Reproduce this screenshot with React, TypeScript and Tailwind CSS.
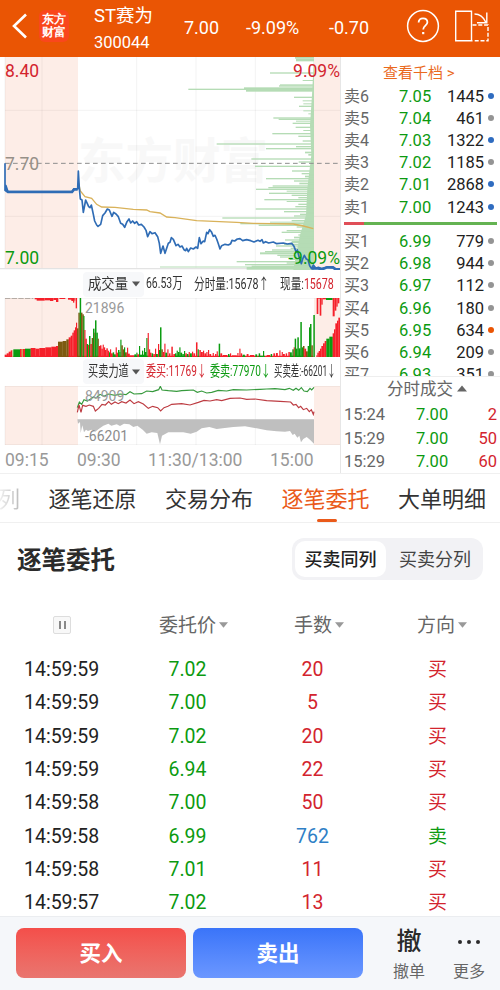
import clsx from "clsx";
import { ReactNode } from "react";

type Point = [number, number];

const toPoints = (list: Point[]) => list.map((p) => p.join(",")).join(" ");

const asks = [
  { label: "卖6", price: "7.05", volume: "1445", dot: "bg-[#2f6cc0]" },
  { label: "卖5", price: "7.04", volume: "461", dot: "bg-[#949494]" },
  { label: "卖4", price: "7.03", volume: "1322", dot: "bg-[#2f6cc0]" },
  { label: "卖3", price: "7.02", volume: "1185", dot: "bg-[#949494]" },
  { label: "卖2", price: "7.01", volume: "2868", dot: "bg-[#2f6cc0]" },
  { label: "卖1", price: "7.00", volume: "1243", dot: "bg-[#2f6cc0]" },
];

const bids = [
  { label: "买1", price: "6.99", volume: "779", dot: "bg-[#949494]" },
  { label: "买2", price: "6.98", volume: "944", dot: "bg-[#949494]" },
  { label: "买3", price: "6.97", volume: "112", dot: "bg-[#949494]" },
  { label: "买4", price: "6.96", volume: "180", dot: "bg-[#949494]" },
  { label: "买5", price: "6.95", volume: "634", dot: "bg-[#ea5404]" },
  { label: "买6", price: "6.94", volume: "209", dot: "bg-[#949494]" },
  { label: "买7", price: "6.93", volume: "351", dot: "bg-[#949494]" },
];

const ticks = [
  { time: "15:24", price: "7.00", volume: "2" },
  { time: "15:29", price: "7.00", volume: "50" },
  { time: "15:29", price: "7.00", volume: "60" },
];

const orders = [
  { time: "14:59:59", price: "7.02", hands: "20", side: "买" },
  { time: "14:59:59", price: "7.00", hands: "5", side: "买" },
  { time: "14:59:59", price: "7.02", hands: "20", side: "买" },
  { time: "14:59:59", price: "6.94", hands: "22", side: "买" },
  { time: "14:59:58", price: "7.00", hands: "50", side: "买" },
  { time: "14:59:58", price: "6.99", hands: "762", side: "卖" },
  { time: "14:59:58", price: "7.01", hands: "11", side: "买" },
  { time: "14:59:57", price: "7.02", hands: "13", side: "买" },
];

// chart data, three units to a pixel
const priceLine: Point[] = [
  [15, 325], [15, 405], [18, 392], [24, 410], [216, 410], [222, 402], [233, 402], [235, 348], [238, 400], [241, 432],
  [246, 435], [250, 472], [257, 435], [262, 446], [266, 455], [270, 458], [274, 450], [280, 478], [284, 498], [290, 510],
  [294, 514], [302, 508], [308, 482], [315, 474], [322, 462], [328, 465], [336, 484], [341, 472], [348, 477], [355, 485],
  [362, 505], [368, 508], [374, 517], [381, 500], [387, 492], [392, 504], [398, 498], [404, 505], [410, 500], [416, 510],
  [424, 508], [432, 516], [438, 526], [443, 545], [450, 530], [456, 536], [465, 533], [473, 545], [478, 565], [482, 595],
  [489, 573], [495, 595], [500, 580], [505, 565], [510, 562], [514, 548], [520, 553], [528, 572], [534, 568], [540, 576],
  [546, 573], [552, 584], [557, 587], [560, 580], [565, 590], [572, 579], [580, 582], [588, 576], [593, 580], [598, 548],
  [603, 566], [610, 558], [614, 560], [620, 532], [624, 536], [629, 524], [634, 530], [640, 544], [645, 541], [650, 552],
  [655, 566], [660, 582], [665, 572], [675, 568], [685, 570], [692, 566], [696, 556], [704, 558], [712, 552], [720, 551],
  [728, 557], [740, 554], [752, 557], [762, 561], [774, 556], [780, 559], [786, 554], [790, 564], [797, 560], [806, 564],
  [820, 561], [830, 566], [850, 564], [862, 567], [875, 565], [882, 574], [888, 590], [892, 585], [898, 608], [904, 626],
  [908, 612], [913, 601], [919, 612], [924, 614], [929, 632], [935, 641], [940, 630], [948, 640], [955, 637], [966, 641],
  [982, 636], [998, 638], [1006, 643], [1018, 642],
];

const averageLine: Point[] = [
  [236, 385], [241, 408], [255, 425], [275, 430], [290, 448], [305, 456], [345, 457], [400, 463], [440, 465], [450, 470],
  [480, 474], [500, 486], [525, 488], [590, 497], [710, 502], [760, 505], [880, 507], [910, 513], [940, 521],
];

const profile: [number, number, number][] = [
  [6, 375, 5], [11, 378, 8], [52, 300, 4], [75, 398, 3], [88, 330, 4], [91, 327, 4], [97, 222, 5], [101, 55, 4], [105, 228, 5],
  [125, 372, 4], [136, 398, 3], [145, 400, 3], [152, 387, 4], [166, 400, 3], [175, 415, 3], [187, 310, 4], [191, 326, 4],
  [197, 378, 3], [203, 368, 4], [215, 377, 4], [225, 400, 3], [234, 307, 4], [242, 385, 4], [256, 398, 4], [265, 140, 4],
  [273, 378, 4], [279, 288, 4], [290, 405, 5], [297, 415, 5], [310, 244, 4], [319, 386, 4], [332, 255, 4], [346, 366, 4],
  [354, 395, 4], [362, 405, 5], [369, 288, 4], [376, 372, 4], [383, 388, 5], [391, 308, 4], [396, 295, 4], [401, 258, 4],
  [407, 350, 3], [413, 297, 4], [419, 365, 4], [426, 385, 4], [432, 283, 4], [438, 350, 3], [446, 385, 4], [453, 376, 4],
  [460, 257, 4], [468, 342, 4], [476, 390, 4], [481, 372, 4], [487, 157, 4], [495, 365, 4], [500, 300, 3], [504, 211, 4],
  [509, 266, 4], [514, 380, 4], [525, 350, 4], [530, 335, 4], [538, 385, 4], [545, 372, 5], [553, 345, 4], [558, 365, 6],
  [566, 342, 4], [571, 318, 4], [578, 362, 4], [583, 306, 4], [588, 285, 4], [592, 270, 6], [599, 322, 4], [604, 330, 4],
  [610, 360, 5], [618, 200, 4], [622, 350, 4], [627, 225, 4], [632, 245, 4], [636, 230, 8],
];

const R = "#f5202a";
const G = "#0b9c10";
const B = "#7d5a10";

// x, top, width, colour
const volumeBars: [number, number, number, string][] = [
  [14, 254, 6, R], [20, 250, 6, R], [26, 245, 6, R], [32, 241, 5, R], [37, 240, 3, "#c8d8a0"], [40, 238, 20, G], [60, 237, 5, R],
  [65, 237, 4, "#c9a050"], [69, 237, 6, R], [75, 236, 17, G], [92, 234, 14, R], [106, 236, 12, R], [118, 234, 18, R],
  [136, 232, 18, R], [154, 230, 14, R], [168, 228, 6, R], [174, 215, 14, B], [188, 213, 11, B], [199, 208, 7, B],
  [206, 202, 6, R], [212, 197, 5, R], [217, 188, 4, R], [221, 181, 4, R], [225, 172, 3, R], [228, 158, 3, R],
  [231, 175, 4, B], [235, 128, 4, B], [239, 84, 4, G], [243, 128, 4, B], [247, 133, 4, B], [250, 138, 3, G], [253, 180, 3, R],
  [256, 206, 4, R], [260, 222, 4, G], [264, 225, 3, R], [267, 198, 4, G], [271, 222, 4, R], [275, 204, 4, B], [279, 176, 4, G],
  [283, 188, 2, B], [285, 151, 4, G], [289, 188, 4, G], [293, 206, 3, B], [296, 228, 4, R], [300, 226, 4, R], [304, 236, 4, R],
  [308, 224, 3, R], [311, 232, 4, R], [315, 240, 4, R], [319, 235, 4, R], [323, 242, 4, R], [327, 247, 3, G], [330, 238, 3, R],
  [333, 250, 5, R], [338, 247, 4, G], [342, 253, 5, G], [347, 232, 3, R], [350, 248, 4, R], [354, 240, 4, G], [358, 246, 3, G],
  [361, 209, 3, G], [364, 226, 4, B], [368, 238, 4, B], [372, 232, 3, G], [375, 247, 5, B], [381, 233, 3, R], [384, 251, 5, R],
  [389, 256, 14, R], [403, 253, 5, G], [409, 248, 3, G], [412, 253, 5, R], [417, 228, 3, G], [420, 254, 6, G], [426, 242, 3, G],
  [429, 254, 3, G], [432, 234, 3, G], [435, 246, 4, G], [439, 204, 3, G], [443, 189, 3, R], [447, 238, 3, R], [450, 248, 4, R],
  [455, 250, 4, G], [460, 252, 4, R], [465, 236, 3, R], [468, 252, 5, G], [474, 222, 3, R], [477, 240, 3, G], [480, 172, 4, G],
  [484, 238, 4, B], [488, 246, 5, R], [493, 221, 3, R], [496, 248, 5, G], [502, 238, 3, R], [507, 250, 4, R], [514, 230, 4, R],
  [520, 252, 5, R], [525, 250, 4, G], [530, 242, 3, G], [534, 246, 4, G], [538, 232, 3, G], [541, 248, 5, G], [547, 252, 4, G],
  [552, 243, 3, G], [556, 250, 4, R], [561, 252, 4, G], [566, 246, 3, R], [570, 250, 5, G], [576, 245, 3, R], [580, 250, 5, R],
  [588, 217, 4, R], [593, 238, 3, G], [598, 240, 4, R], [603, 246, 5, R], [609, 242, 3, R], [613, 250, 5, R], [619, 246, 3, R],
  [624, 240, 3, R], [628, 252, 5, R], [638, 249, 3, R], [645, 252, 4, R], [650, 244, 3, R], [656, 221, 4, G], [661, 250, 5, R],
  [668, 255, 14, R], [684, 252, 4, G], [690, 250, 3, R], [696, 256, 14, R], [712, 249, 3, R], [718, 236, 3, R], [722, 250, 4, R],
  [728, 254, 6, G], [740, 252, 5, R], [750, 255, 12, R], [766, 253, 5, G], [776, 250, 4, G], [789, 243, 3, G], [800, 255, 10, R],
  [812, 252, 4, G], [820, 250, 5, R], [828, 249, 5, R], [838, 241, 3, R], [845, 246, 3, R], [849, 252, 5, R], [857, 250, 4, R],
  [865, 246, 4, R], [870, 247, 5, G], [877, 238, 4, G], [881, 232, 3, R], [884, 206, 4, G], [888, 236, 4, G], [892, 202, 4, G],
  [896, 235, 5, G], [901, 156, 4, G], [905, 232, 4, G], [909, 228, 4, B], [913, 236, 5, R], [918, 244, 5, B], [923, 228, 4, G],
  [927, 172, 3, G], [930, 162, 4, G], [934, 226, 4, B], [940, 135, 4, G],
  [949, 256, 3, R], [952, 248, 4, R], [956, 243, 4, R], [960, 236, 4, R], [964, 228, 5, R], [969, 220, 5, R], [974, 213, 5, R],
  [979, 206, 9, G], [988, 200, 10, G], [998, 190, 4, R], [1002, 178, 4, R], [1006, 160, 5, R], [1011, 152, 4, R], [1015, 143, 5, R],
];

const hangingBars: [number, number, number, string][] = [
  [104, 4, 8, R], [110, 8, 24, R], [134, 7, 16, R], [150, 9, 10, R], [160, 6, 8, R], [168, 12, 7, R], [178, 3, 18, R],
  [204, 5, 12, R], [214, 9, 5, R], [219, 14, 4, R], [223, 8, 3, R], [227, 31, 4, R],
  [950, 48, 5, R], [955, 3, 4, R], [959, 53, 5, R], [964, 20, 4, R], [968, 4, 10, R], [978, 6, 20, G], [998, 55, 6, R],
  [1004, 38, 5, R], [1009, 26, 4, R], [1013, 16, 5, R],
];

const sellPower: Point[] = [
  [232, 412], [238, 395], [245, 402], [252, 388], [262, 392], [272, 386], [280, 380], [288, 383], [300, 372], [312, 378],
  [325, 371], [345, 375], [360, 371], [378, 373], [390, 364], [402, 371], [425, 370], [440, 362], [458, 364], [476, 358],
  [481, 348], [486, 359], [505, 361], [530, 363], [545, 361], [560, 360], [580, 359], [592, 366], [605, 362], [620, 368],
  [635, 366], [655, 360], [680, 362], [700, 358], [740, 359], [780, 357], [800, 356], [825, 355], [855, 358], [868, 354],
  [880, 360], [888, 354], [896, 360], [904, 352], [912, 362], [922, 364], [930, 354], [935, 359], [942, 351],
];

const buyPower: Point[] = [
  [232, 426], [237, 404], [243, 426], [248, 405], [258, 408], [268, 404], [280, 408], [286, 422], [296, 414], [306, 402],
  [316, 404], [326, 394], [334, 402], [345, 395], [355, 400], [365, 394], [378, 398], [390, 389], [402, 400], [415, 394],
  [430, 401], [445, 414], [458, 408], [473, 412], [482, 422], [492, 412], [504, 408], [515, 402], [545, 400], [570, 404],
  [595, 396], [612, 390], [630, 392], [650, 388], [665, 391], [690, 384], [720, 383], [740, 387], [765, 386], [800, 391],
  [840, 393], [872, 395], [880, 404], [888, 402], [896, 412], [902, 408], [910, 418], [920, 414], [928, 424], [934, 418],
  [940, 432], [942, 424],
];

const powerGap: Point[] = [
  [232, 447], [234, 460], [240, 455], [242, 488], [247, 465], [252, 486], [258, 478], [264, 482], [274, 478], [286, 484],
  [296, 476], [310, 466], [325, 460], [334, 466], [350, 462], [360, 467], [372, 460], [388, 462], [400, 470], [412, 466],
  [428, 478], [440, 490], [455, 486], [472, 488], [480, 522], [486, 496], [505, 486], [530, 486], [550, 486], [572, 490],
  [590, 484], [605, 474], [628, 470], [650, 476], [668, 474], [700, 470], [735, 468], [770, 474], [800, 480], [830, 483],
  [855, 484], [870, 482], [878, 494], [884, 490], [892, 502], [898, 496], [903, 516], [910, 506], [920, 500], [930, 508], [942, 520], [942, 447],
];

const green = "text-[#0b9a10]";
const red = "text-[#d3242e]";

function Caret({ className }: { className?: string }) {
  return (
    <svg viewBox="0 0 10 6" className={className}>
      <path d="M0 0h10L5 6z" fill="currentColor" />
    </svg>
  );
}

function Narrow({ box, scale, className, children }: { box: string; scale: string; className?: string; children: ReactNode }) {
  return (
    <span className={clsx("block shrink-0", box)}>
      <span className={clsx("inline-block origin-left whitespace-nowrap", scale, className)}>{children}</span>
    </span>
  );
}

function Header() {
  return (
    <header className="flex h-[57px] items-center bg-[#ea5504] text-white">
      <svg viewBox="0 0 16 26" className="mb-[5px] ml-[12px] h-[26px] w-4 shrink-0" fill="none" stroke="currentColor" strokeWidth="2.6">
        <path d="M14 1.5L2 13l12 11.5" />
      </svg>
      <div className="mb-[5px] ml-[11px] flex h-[32px] w-[30px] shrink-0 flex-col items-center justify-center rounded-md bg-[#f9471c] font-serif text-[11.5px] leading-[13.5px] font-black">
        <span>东方</span>
        <span>财富</span>
      </div>
      <div className="ml-[25px] w-[90px]">
        <div className="text-[18.5px] leading-[26px]">ST赛为</div>
        <div className="pt-[2px] text-[16.5px] leading-[24px]">300044</div>
      </div>
      <div className="w-[62px] pb-[3px] text-[18px]">7.00</div>
      <div className="w-[83px] pb-[3px] text-[18px]">-9.09%</div>
      <div className="w-[77px] pb-[3px] text-[18px]">-0.70</div>
      <svg viewBox="0 0 34 34" className="mb-[5px] h-[34px] w-[34px] shrink-0" fill="none" stroke="currentColor" strokeWidth="1.5">
        <circle cx="17" cy="17" r="15.4" />
        <path d="M12.600 13.600c0-2.700 1.900-4.300 4.400-4.300s4.400 1.600 4.400 4c0 3.300-4.200 3.500-4.200 7.200" strokeWidth="1.8" />
        <path d="M16.100 23h2.200v2.200h-2.200z" fill="currentColor" stroke="none" />
      </svg>
      <svg viewBox="0 0 36 34" className="mb-[5px] ml-[14px] h-[34px] w-9 shrink-0" fill="none" stroke="currentColor" strokeWidth="1.4">
        <path d="M1.700 2.200h15.800v29.600H1.700z" />
        <path d="M18.500 16H34v15.800H18.500" strokeDasharray="4 1.800" />
        <path d="M20.500 5c6 0 9 3 11.500 8.500M32.800 3.500v10.200H23" />
      </svg>
    </header>
  );
}

function PricePane() {
  return (
    <div className="relative h-[213px]">
      <span className="absolute top-[77px] left-[78px] text-[47.5px] leading-[56px] font-bold text-[#f8f8f8]">东方财富</span>
      <svg viewBox="0 6 1020 639" className="absolute inset-0 h-full w-full">
        <path d="M15 6h219v633H15zM942 6h78v633h-78z" fill="#fdede7" />
        <path d="M126 6v633M410 6v633M588 6v633M766 6v633M15 166h1005M15 484h1005M15 6v633" stroke="#000" strokeOpacity=".05" strokeWidth="3" />
        <path d="M0 641h1020" stroke="#e3e3e3" strokeWidth="4" />
        <path d="M480 636h460" stroke="#b5dcb5" strokeWidth="3" />
        <g fill="#b5dcb5">
          <path d="M942 6L936 120L930 210L934 300L922 400L918 480L900 540L890 590L880 645H942Z" />
          {profile.map(([y, x, h]) => (
            <rect key={y} x={510 + x} y={y} width={432 - x} height={h} />
          ))}
        </g>
        <path d="M15 325h1005" stroke="#8d8d8d" strokeWidth="3" strokeDasharray="14 10" />
        <polyline points={toPoints(averageLine)} fill="none" stroke="#d9b25a" strokeWidth="4" />
        <polyline points={toPoints(priceLine)} fill="none" stroke="#2f6cb5" strokeWidth="5" strokeLinejoin="round" />
        <path d="M15 404l9 7h192l6-8h11" fill="none" stroke="#2f6cb5" strokeWidth="8" />
        <path d="M936 640h18l12 3l15-6h18l8 6h13" fill="none" stroke="#2f6cb5" strokeWidth="8" />
      </svg>
      <span className={clsx("absolute top-[3px] left-[5px] text-[17.5px] leading-[22px]", red)}>8.40</span>
      <span className="absolute top-[96px] left-[5px] text-[17.5px] leading-[22px] text-[#969088]">7.70</span>
      <span className={clsx("absolute top-[190px] left-[5px] text-[17.5px] leading-[22px]", green)}>7.00</span>
      <span className={clsx("absolute top-[3px] right-0 text-[17.5px] leading-[22px]", red)}>9.09%</span>
      <span className={clsx("absolute top-[190px] right-0 text-[17.5px] leading-[22px]", green)}>-9.09%</span>
    </div>
  );
}

function VolumePane() {
  return (
    <div className="relative h-[59px]">
      <svg viewBox="0 84 1020 177" className="absolute inset-0 h-full w-full">
        <path d="M15 84h219v177H15zM942 84h78v177h-78z" fill="#fdede7" />
        <path d="M126 84v177M410 84v177M588 84v177M766 84v177M15 84v177M15 85h1005" stroke="#000" strokeOpacity=".05" strokeWidth="3" />
        <path d="M15 85h85" stroke="#a9a09b" strokeWidth="3" strokeDasharray="16 4" />
        <path d="M15 259h925" stroke={R} strokeWidth="4" />
        <path d="M340 259h20M403 259h45M525 259h50M684 259h6M728 259h8M776 259h18M868 259h35" stroke={G} strokeWidth="4" />
        {volumeBars.map(([x, top, w, color]) => (
          <rect key={x} x={x} y={top} width={w + 0.5} height={261 - top} fill={color} />
        ))}
        {hangingBars.map(([x, h, w, color]) => (
          <rect key={x} x={x} y={84} width={w} height={h} fill={color} />
        ))}
      </svg>
      <span className="absolute top-0 left-[85px] text-[14px] leading-[20px] text-[#999]">21896</span>
    </div>
  );
}

function PowerPane() {
  return (
    <div className="relative h-[59px]">
      <svg viewBox="0 347 1020 177" className="absolute inset-0 h-full w-full">
        <path d="M15 347h219v177H15zM942 347h78v177h-78z" fill="#fdede7" />
        <path d="M126 347v177M410 347v177M588 347v177M766 347v177M15 347v177M15 348h1005M15 523h1005" stroke="#000" strokeOpacity=".05" strokeWidth="3" />
        <polygon points={toPoints(powerGap)} fill="#bfbfbf" />
        <polyline points={toPoints(sellPower)} fill="none" stroke="#379a3d" strokeWidth="3.5" />
        <polyline points={toPoints(buyPower)} fill="none" stroke="#bd3c42" strokeWidth="3.5" />
      </svg>
      <span className="absolute top-0 left-[85px] text-[14px] leading-[21px] text-[#999]">84909</span>
      <span className="absolute top-[40px] left-[85px] text-[14px] leading-[21px] text-[#8c8c8c]">-66201</span>
    </div>
  );
}

function Chart() {
  return (
    <div className="w-[341px] shrink-0 border-r border-[#e6e6e6] text-[#333]">
      <PricePane />
      <div className="flex h-7 items-center pl-[83px] text-[14.5px]">
        <div className="flex h-[25px] w-[61px] items-center rounded bg-[#f7f8fa] pl-[5px]">
          <Narrow box="w-[44px]" scale="scale-x-[.89]" className="text-[15px]">成交量</Narrow>
          <Caret className="h-[6px] w-[8px] shrink-0 text-[#555]" />
        </div>
        <Narrow box="ml-[2px] w-[48px]" scale="scale-x-[.72]">66.53万</Narrow>
        <Narrow box="w-[86px]" scale="scale-x-[.71]" className="text-[15px]">分时量:15678↑</Narrow>
        <Narrow box="w-[58px]" scale="scale-x-[.71]" className="text-[15px]">
          现量:<span className={red}>15678</span>
        </Narrow>
      </div>
      <VolumePane />
      <div className="flex h-[29px] items-center pl-[83px] text-[15px]">
        <div className="flex h-[25px] w-[61px] items-center rounded bg-[#f7f8fa] pl-[5px]">
          <Narrow box="w-[44px]" scale="scale-x-[.68]">买卖力道</Narrow>
          <Caret className="h-[6px] w-[8px] shrink-0 text-[#555]" />
        </div>
        <Narrow box="ml-[2px] w-[64px]" scale="scale-x-[.67]" className={red}>委买:11769↓</Narrow>
        <Narrow box="w-[64px]" scale="scale-x-[.67]" className={green}>委卖:77970↓</Narrow>
        <Narrow box="w-[62px]" scale="scale-x-[.56]">买卖差:-66201↓</Narrow>
      </div>
      <PowerPane />
      <div className="flex h-7 items-center pt-[2px] text-[17.5px] text-[#999]">
        <span className="ml-[5px] w-[72px]">09:15</span>
        <span className="w-[71px]">09:30</span>
        <span className="w-[122px]">11:30/13:00</span>
        <span>15:00</span>
      </div>
    </div>
  );
}

function QuoteRow({ label, price, volume, dot }: (typeof asks)[number]) {
  return (
    <div className="flex h-[22.2px] shrink-0 items-center text-[16.5px] leading-[22px]">
      <span className="w-[40px] text-[16px] text-[#666]">{label}</span>
      <span className={clsx("w-[52px] pl-[15px]", green)}>{price}</span>
      <span className="w-[48px] text-right text-[#222]">{volume}</span>
      <i className={clsx("mb-[2px] ml-[4px] h-[6px] w-[6px] rounded-full", dot)} />
    </div>
  );
}

function OrderBook() {
  return (
    <div className="flex min-w-0 flex-1 flex-col pl-[3px]">
      <div className="h-[28.5px] shrink-0 pt-[4px] pl-[39px] text-[15px] leading-[24px] text-[#ea6a1e]">查看千档 &gt;</div>
      {asks.map((row) => (
        <QuoteRow key={row.label} {...row} />
      ))}
      <div className="mt-[3.3px] mr-[3px] flex h-[3px] shrink-0">
        <div className="w-[20px] bg-[#e04f58]" />
        <div className="flex-1 bg-[#64b352]" />
      </div>
      <div className="mt-[6px] h-[145px] shrink-0 overflow-hidden">
        {bids.map((row) => (
          <QuoteRow key={row.label} {...row} />
        ))}
      </div>
      <div className="flex h-[27px] shrink-0 items-center border-t border-[#eee] pl-[43px] text-[16.5px] leading-[26px] text-[#666]">
        分时成交
        <Caret className="mb-[3px] ml-[4px] h-[7px] w-[10px] rotate-180" />
      </div>
      {ticks.map((row, i) => (
        <div key={i} className="flex h-[23.5px] shrink-0 items-center pr-[3px] text-[16.5px] leading-[23px]">
          <span className="w-[72px] text-[#666]">{row.time}</span>
          <span className={green}>{row.price}</span>
          <span className={clsx("ml-auto", red)}>{row.volume}</span>
        </div>
      ))}
    </div>
  );
}

function Tabs() {
  return (
    <nav className="flex h-[50px] shrink-0 gap-[28.5px] overflow-hidden border-t border-b border-[#f0f0f0] text-[22px] leading-[51px] whitespace-nowrap text-[#333]">
      <span className="-ml-[2px] bg-gradient-to-r from-[#f4f4f4] to-[#bbb] bg-clip-text text-transparent">列</span>
      <span>逐笔还原</span>
      <span>交易分布</span>
      <span className="relative text-[#ea5a1a]">
        逐笔委托
        <i className="absolute top-[45px] left-[35px] h-[3px] w-[20px] rounded-full bg-[#ea5a1a]" />
      </span>
      <span>大单明细</span>
    </nav>
  );
}

function Orders() {
  return (
    <section className="flex-1 overflow-hidden">
      <div className="mt-[15px] flex h-[42px] items-center justify-between pr-[17px] pl-[17px]">
        <h2 className="pt-[4px] text-[24.5px] font-bold text-[#2b2b2b]">逐笔委托</h2>
        <div className="flex h-[42px] w-[191px] rounded-[12px] bg-[#f2f2f5] p-[3px] text-[18px] leading-[38px] text-[#444]">
          <span className="h-[36px] w-[91px] rounded-[10px] bg-white text-center font-medium text-[#222]">买卖同列</span>
          <span className="flex-1 pl-[13px]">买卖分列</span>
        </div>
      </div>
      <div className="mt-[30px] flex h-[30px] items-center text-[19px] leading-[32px] text-[#666]">
        <span className="mb-[1px] ml-[53px] flex h-[18px] w-[18px] items-center justify-center gap-[3px] rounded-[2px] border border-[#ddd] bg-[#f8f8f8]">
          <i className="h-[8px] w-[2px] bg-[#888]" />
          <i className="h-[8px] w-[2px] bg-[#888]" />
        </span>
        <span className="ml-[88px] flex w-[135px] items-center pt-[2px]">
          委托价
          <Caret className="mb-[3px] ml-[3px] h-[6px] w-[9px] text-[#999]" />
        </span>
        <span className="flex w-[123px] items-center pt-[2px]">
          手数
          <Caret className="mb-[3px] ml-[3px] h-[6px] w-[9px] text-[#999]" />
        </span>
        <span className="flex items-center pt-[2px]">
          方向
          <Caret className="mb-[3px] ml-[3px] h-[6px] w-[9px] text-[#999]" />
        </span>
      </div>
      <div className="mt-[13px]">
        {orders.map((row, i) => (
          <div key={i} className="flex h-[33.3px] items-center text-[19.5px] leading-[33px]">
            <span className="w-[125px] pl-[24px] text-[#222]">{row.time}</span>
            <span className={clsx("w-[125px] text-center", green)}>{row.price}</span>
            <span className={clsx("w-[125px] text-center", row.side === "卖" ? "text-[#2f7fc6]" : red)}>{row.hands}</span>
            <span className={clsx("w-[125px] text-center text-[19px]", row.side === "卖" ? green : red)}>{row.side}</span>
          </div>
        ))}
      </div>
    </section>
  );
}

function BottomBar() {
  return (
    <footer className="flex h-[74px] shrink-0 border-t border-[#ebedf0] bg-[#f5f7fa] pt-[11px] pl-[16px]">
      <button className="h-[50px] w-[170px] rounded-lg bg-gradient-to-b from-[#f44e4a] to-[#e9756f] pt-[3px] text-[21.5px] font-bold text-white">买入</button>
      <button className="ml-[7px] h-[50px] w-[170px] rounded-lg bg-gradient-to-b from-[#3a74f9] to-[#6b97ff] pt-[3px] text-[21.5px] font-bold text-white">卖出</button>
      <div className="ml-[16px] flex w-[60px] flex-col items-center text-[#666]">
        <span className="pt-[1px] text-[25px] leading-[26px] font-medium text-[#2b2b2b]">撤</span>
        <span className="mt-[5px] text-[16px] leading-[24px]">撤单</span>
      </div>
      <div className="flex w-[60px] flex-col items-center text-[#666]">
        <span className="flex h-[27px] items-center gap-[5px]">
          <i className="h-[4px] w-[4px] rounded-full bg-[#2b2b2b]" />
          <i className="h-[4px] w-[4px] rounded-full bg-[#2b2b2b]" />
          <i className="h-[4px] w-[4px] rounded-full bg-[#2b2b2b]" />
        </span>
        <span className="mt-[5px] text-[16px] leading-[24px]">更多</span>
      </div>
    </footer>
  );
}

export default function App() {
  return (
    <div className="flex h-[990px] w-[500px] flex-col overflow-hidden bg-white font-[Roboto,'Noto_Sans_CJK_SC',sans-serif]">
      <Header />
      <div className="flex h-[416px] shrink-0">
        <Chart />
        <OrderBook />
      </div>
      <Tabs />
      <Orders />
      <BottomBar />
    </div>
  );
}
